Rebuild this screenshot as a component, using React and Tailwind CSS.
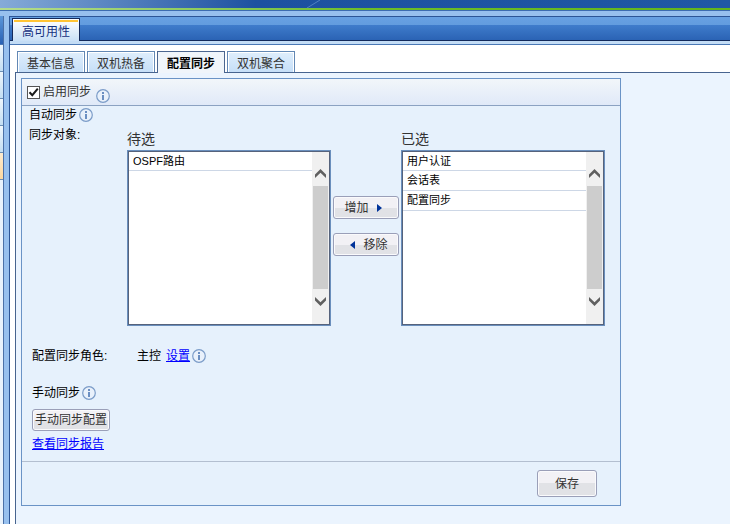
import React, { useState } from "react";
import clsx from "clsx";

const tabs = ["基本信息", "双机热备", "配置同步", "双机聚合"];

const InfoIcon = ({ className }) => (
  <svg
    className={clsx("h-[14px] w-[14px] shrink-0", className)}
    viewBox="0 0 14 14"
    fill="none"
  >
    <circle cx="7" cy="7" r="6.3" fill="#e9f1fb" stroke="#7b9cc8" strokeWidth="1.2" />
    <path d="M6 3h2v2H6zM6 6h2v5H6z" fill="#6b8fc2" />
  </svg>
);

const ScrollArrow = ({ down }) => (
  <svg
    className={clsx("h-[9px] w-[11px]", down && "rotate-180")}
    viewBox="0 0 11 9"
    fill="#606060"
  >
    <path d="M5.5 0L11 5.5V9L5.5 3.7L0 9V5.5z" />
  </svg>
);

const Button = ({ className, children }) => (
  <button
    type="button"
    className={clsx(
      "flex items-center justify-center rounded-[3px] border border-[#9a9fb8] bg-linear-to-b from-[#f2f1f5] from-50% to-[#e1e2e6] to-50% text-xs text-[#333] shadow-[inset_0_0_0_1px_#fafafc]",
      className
    )}
  >
    {children}
  </button>
);

const ListBox = ({ title, items }) => (
  <div className="w-[204px]">
    <h3 className="h-[21px] text-sm leading-5 text-[#333]">{title}</h3>
    <div className="flex h-44 border border-[#6a8fbd] bg-white">
      <div className="flex flex-1 border border-[#56637c]">
        <ul className="flex-1">
          {items.map((item) => (
            <li
              key={item}
              className="h-5 border-b border-[#cdd7e6] bg-white pl-1 text-[11px] leading-[18px] text-black first:h-[19px]"
            >
              {item}
            </li>
          ))}
        </ul>
        {/* Scrollbar */}
        <div className="flex w-[17px] flex-col items-center bg-[#f0f0f0] px-px">
          <div className="flex h-[34px] items-end pb-2">
            <ScrollArrow />
          </div>
          <div className="w-full flex-1 bg-[#cdcdcd]" />
          <div className="flex h-[35px] items-start pt-2">
            <ScrollArrow down />
          </div>
        </div>
      </div>
    </div>
  </div>
);

const Sidebar = () => (
  <div className="flex w-1 shrink-0 flex-col border-r border-[#4a70a8] bg-[#e8f2fc]">
    <div className="h-[29px] border-b border-[#4a78b5] bg-linear-to-b from-[#5c97da] to-[#2961b3]" />
    <div className="h-[27px] border-b border-[#6c8fb5] bg-linear-to-b from-[#eef6fc] to-[#c3def3]" />
    <div className="h-[27px] border-b border-[#6c8fb5] bg-linear-to-b from-[#eef6fc] to-[#c3def3]" />
    <div className="h-[27px] border-b border-[#6c8fb5] bg-linear-to-b from-[#eef6fc] to-[#c3def3]" />
    <div className="h-[27px] border-b border-[#6c8fb5] bg-linear-to-b from-[#eef6fc] to-[#c3def3]" />
    <div className="h-[27px] border-b border-[#6c8fb5] bg-linear-to-b from-[#fdebcf] to-[#fcd8a0]" />
  </div>
);

const SyncForm = () => {
  const [enabled, setEnabled] = useState(true);

  return (
    <form className="w-[600px] border border-[#6a93c6] bg-[#e6f1fc] text-xs text-black">
      {/* Header */}
      <div className="flex h-[27px] items-center border-b border-[#8ba2c2] bg-linear-to-b from-[#f2f6fa] to-[#e0e9f8] pl-[5px]">
        <label className="flex items-center leading-5 text-[#333]">
          <span className="relative mr-[3px] h-[13px] w-[13px]">
            <input
              type="checkbox"
              checked={enabled}
              onChange={(e) => setEnabled(e.target.checked)}
              className="block h-[13px] w-[13px] appearance-none border border-[#555] bg-white"
            />
            {enabled && (
              <svg
                className="pointer-events-none absolute inset-0"
                viewBox="0 0 13 13"
                fill="none"
                stroke="#1a1a1a"
                strokeWidth="2"
              >
                <path d="M2.5 6.2L5.3 9.2L10.8 2.6" />
              </svg>
            )}
          </span>
          启用同步
        </label>
        <InfoIcon className="mt-2 ml-[5px]" />
      </div>

      {/* Auto sync */}
      <div className="flex h-[18px] items-center pl-[7px]">
        自动同步
        <InfoIcon className="ml-[2px]" />
      </div>
      <div className="flex pl-[7px]">
        <div className="w-[98px] leading-[22px]">同步对象:</div>
        <div className="flex pt-[5px]">
          <ListBox title="待选" items={["OSPF路由"]} />
          <div className="flex w-[70px] flex-col items-center gap-[14px] pt-[67px]">
            <Button className="h-[23px] w-[66px] gap-2 pr-[6px]">
              增加
              <svg className="h-2 w-[5px]" viewBox="0 0 5 8" fill="#003399">
                <path d="M0 0L5 4L0 8z" />
              </svg>
            </Button>
            <Button className="h-[23px] w-[66px] gap-2 pl-[6px]">
              <svg className="h-2 w-[5px]" viewBox="0 0 5 8" fill="#003399">
                <path d="M5 0L0 4L5 8z" />
              </svg>
              移除
            </Button>
          </div>
          <ListBox title="已选" items={["用户认证", "会话表", "配置同步"]} />
        </div>
      </div>

      {/* Role and manual sync */}
      <div className="flex h-[135px] flex-col items-start pt-5 pl-[10px]">
        <div className="flex h-5 items-center leading-[22px]">
          <span className="w-[105px]">配置同步角色:</span>
          主控
          <a href="#" className="ml-[5px] text-[#0000ff] underline">
            设置
          </a>
          <InfoIcon className="ml-[2px]" />
        </div>
        <div className="mt-[17px] flex h-5 items-center">
          手动同步
          <InfoIcon className="ml-[2px]" />
        </div>
        <Button className="mt-[6px] h-[22px] w-[78px]">手动同步配置</Button>
        <a href="#" className="mt-[3px] leading-5 text-[#0000ff] underline">
          查看同步报告
        </a>
      </div>

      {/* Footer */}
      <div className="flex h-[44px] items-center justify-end border-t border-[#b3bfd0] pr-[23px]">
        <Button className="h-[27px] w-[60px]">保存</Button>
      </div>
    </form>
  );
};

export default function App() {
  const [active, setActive] = useState("配置同步");

  return (
    <div className="flex min-h-screen flex-col bg-[#97c0ee] font-['Liberation_Sans','Noto_Sans_CJK_SC',sans-serif]">
      {/* Banner */}
      <div className="flex h-2 justify-center overflow-hidden bg-linear-to-r from-[#86abd8] via-[#1d51a0] via-35% to-[#2058a4] pr-[56px]">
        <svg className="h-2 w-[60px]" viewBox="0 0 60 8" fill="none">
          <path d="M0 8L13 0" stroke="#4f80c2" />
        </svg>
      </div>
      <div className="h-[2px] bg-linear-to-r from-[#b4dc8c] via-[#6cbd28] via-50% to-[#62b41c]" />
      <div className="h-px bg-[#3d6cb0]" />

      <div className="flex flex-1 gap-[5px] pt-[5px]">
        <Sidebar />
        <main className="flex flex-1 flex-col border-t border-l border-[#2c5596] bg-white">
          {/* Title bar */}
          <div className="h-6 bg-linear-to-b from-[#67a0e2] to-[#5a94d8]">
            <div className="flex h-full items-end bg-[linear-gradient(to_bottom,transparent_33%,#3f7ccb_34%,#2961b3_100%)] pl-[2px] shadow-[inset_0_-1px_0_#12295a]">
              <div className="h-[23px] w-[68px] border border-b-0 border-[#152b5c] bg-linear-to-b from-white to-[#c9e0f6] px-px pt-px">
                <h1 className="border-t-2 border-[#ffc434] text-center text-xs leading-5 text-[#15317e]">
                  高可用性
                </h1>
              </div>
            </div>
          </div>
          <div className="h-1 border-b border-[#4a78b5] bg-[#c3dcf5]" />

          {/* Tabs */}
          <div className="flex gap-[2px] pt-[6px] pl-[7px]">
            {tabs.map((tab) => (
              <button
                key={tab}
                type="button"
                onClick={() => setActive(tab)}
                className={clsx(
                  "w-[68px] border border-b-0 pt-[3px] text-xs",
                  tab === active
                    ? "relative -mb-px h-[22px] border-[#4b6690] bg-[#f0f5fa] font-bold text-black"
                    : "h-[21px] border-[#6288b5] bg-linear-to-b from-[#dfeefc] to-[#c6dff8] text-[#333] shadow-[inset_1px_1px_0_white,inset_-1px_0_0_white]"
                )}
              >
                {tab}
              </button>
            ))}
          </div>
          <div className="ml-[5px] flex-1 border-t border-l border-[#47648f] bg-[#ebf4fe] pt-[5px] pb-4 pl-[5px]">
            <SyncForm />
          </div>
        </main>
      </div>
    </div>
  );
}
